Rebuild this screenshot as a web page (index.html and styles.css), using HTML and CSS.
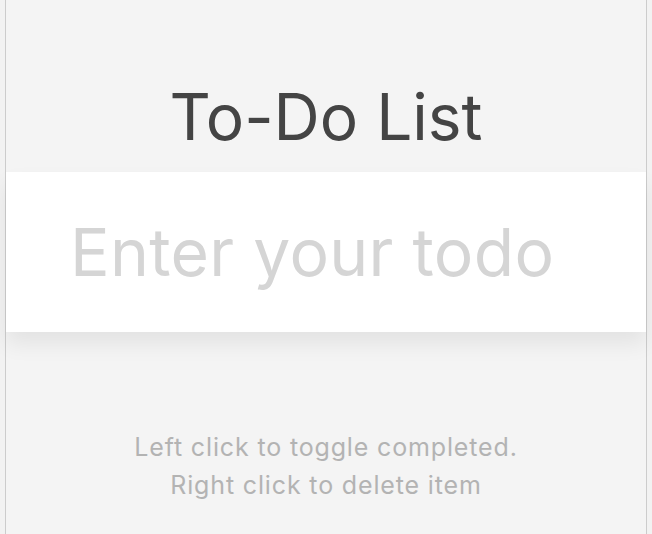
FILE: index.html
```html
<!DOCTYPE html>
<html lang="en">
<head>
<meta charset="utf-8">
<title>To-Do List</title>
<link rel="stylesheet" href="styles.css">
</head>
<body>
<main class="container">
  <h1 class="title">To-Do List</h1>
  <form class="todo-form">
    <input class="todo-input" type="text" placeholder="Enter your todo" autocomplete="off">
  </form>
  <ul class="todo-list"></ul>
  <p class="hint">Left click to toggle completed.<br>Right click to delete item</p>
</main>
</body>
</html>
```
FILE: styles.css
```css
* { box-sizing: border-box; }
html, body { margin: 0; padding: 0; }
body {
  background: #f2f2f2;
  font-family: "Inter", "Open Sans", sans-serif;
}
.container {
  width: 642px;
  margin: 0 auto;
  min-height: 100vh;
  background: #f4f4f4;
  border-left: 1px solid #cccccc;
  border-right: 1px solid #cccccc;
  display: flex;
  flex-direction: column;
}
.title {
  margin: 0;
  padding-top: 62px;
  font-size: 64px;
  line-height: 110px;
  font-weight: 400;
  color: #444444;
  text-align: center;
}
.todo-form { margin: 0; }
.todo-input {
  display: block;
  width: 100%;
  height: 160px;
  border: none;
  outline: none;
  background: #ffffff;
  padding: 0 64px;
  font-family: inherit;
  font-size: 66px;
  letter-spacing: 0.3px;
  color: #444444;
  box-shadow: 0 12px 20px rgba(0, 0, 0, 0.07);
}
.todo-input::placeholder { color: #d5d5d5; }
.todo-list { margin: 0; padding: 0; list-style: none; min-height: 96px; }
.hint {
  margin: 0;
  text-align: center;
  font-size: 25px;
  letter-spacing: 0.85px;
  line-height: 38px;
  color: #b3b3b3;
}
```
